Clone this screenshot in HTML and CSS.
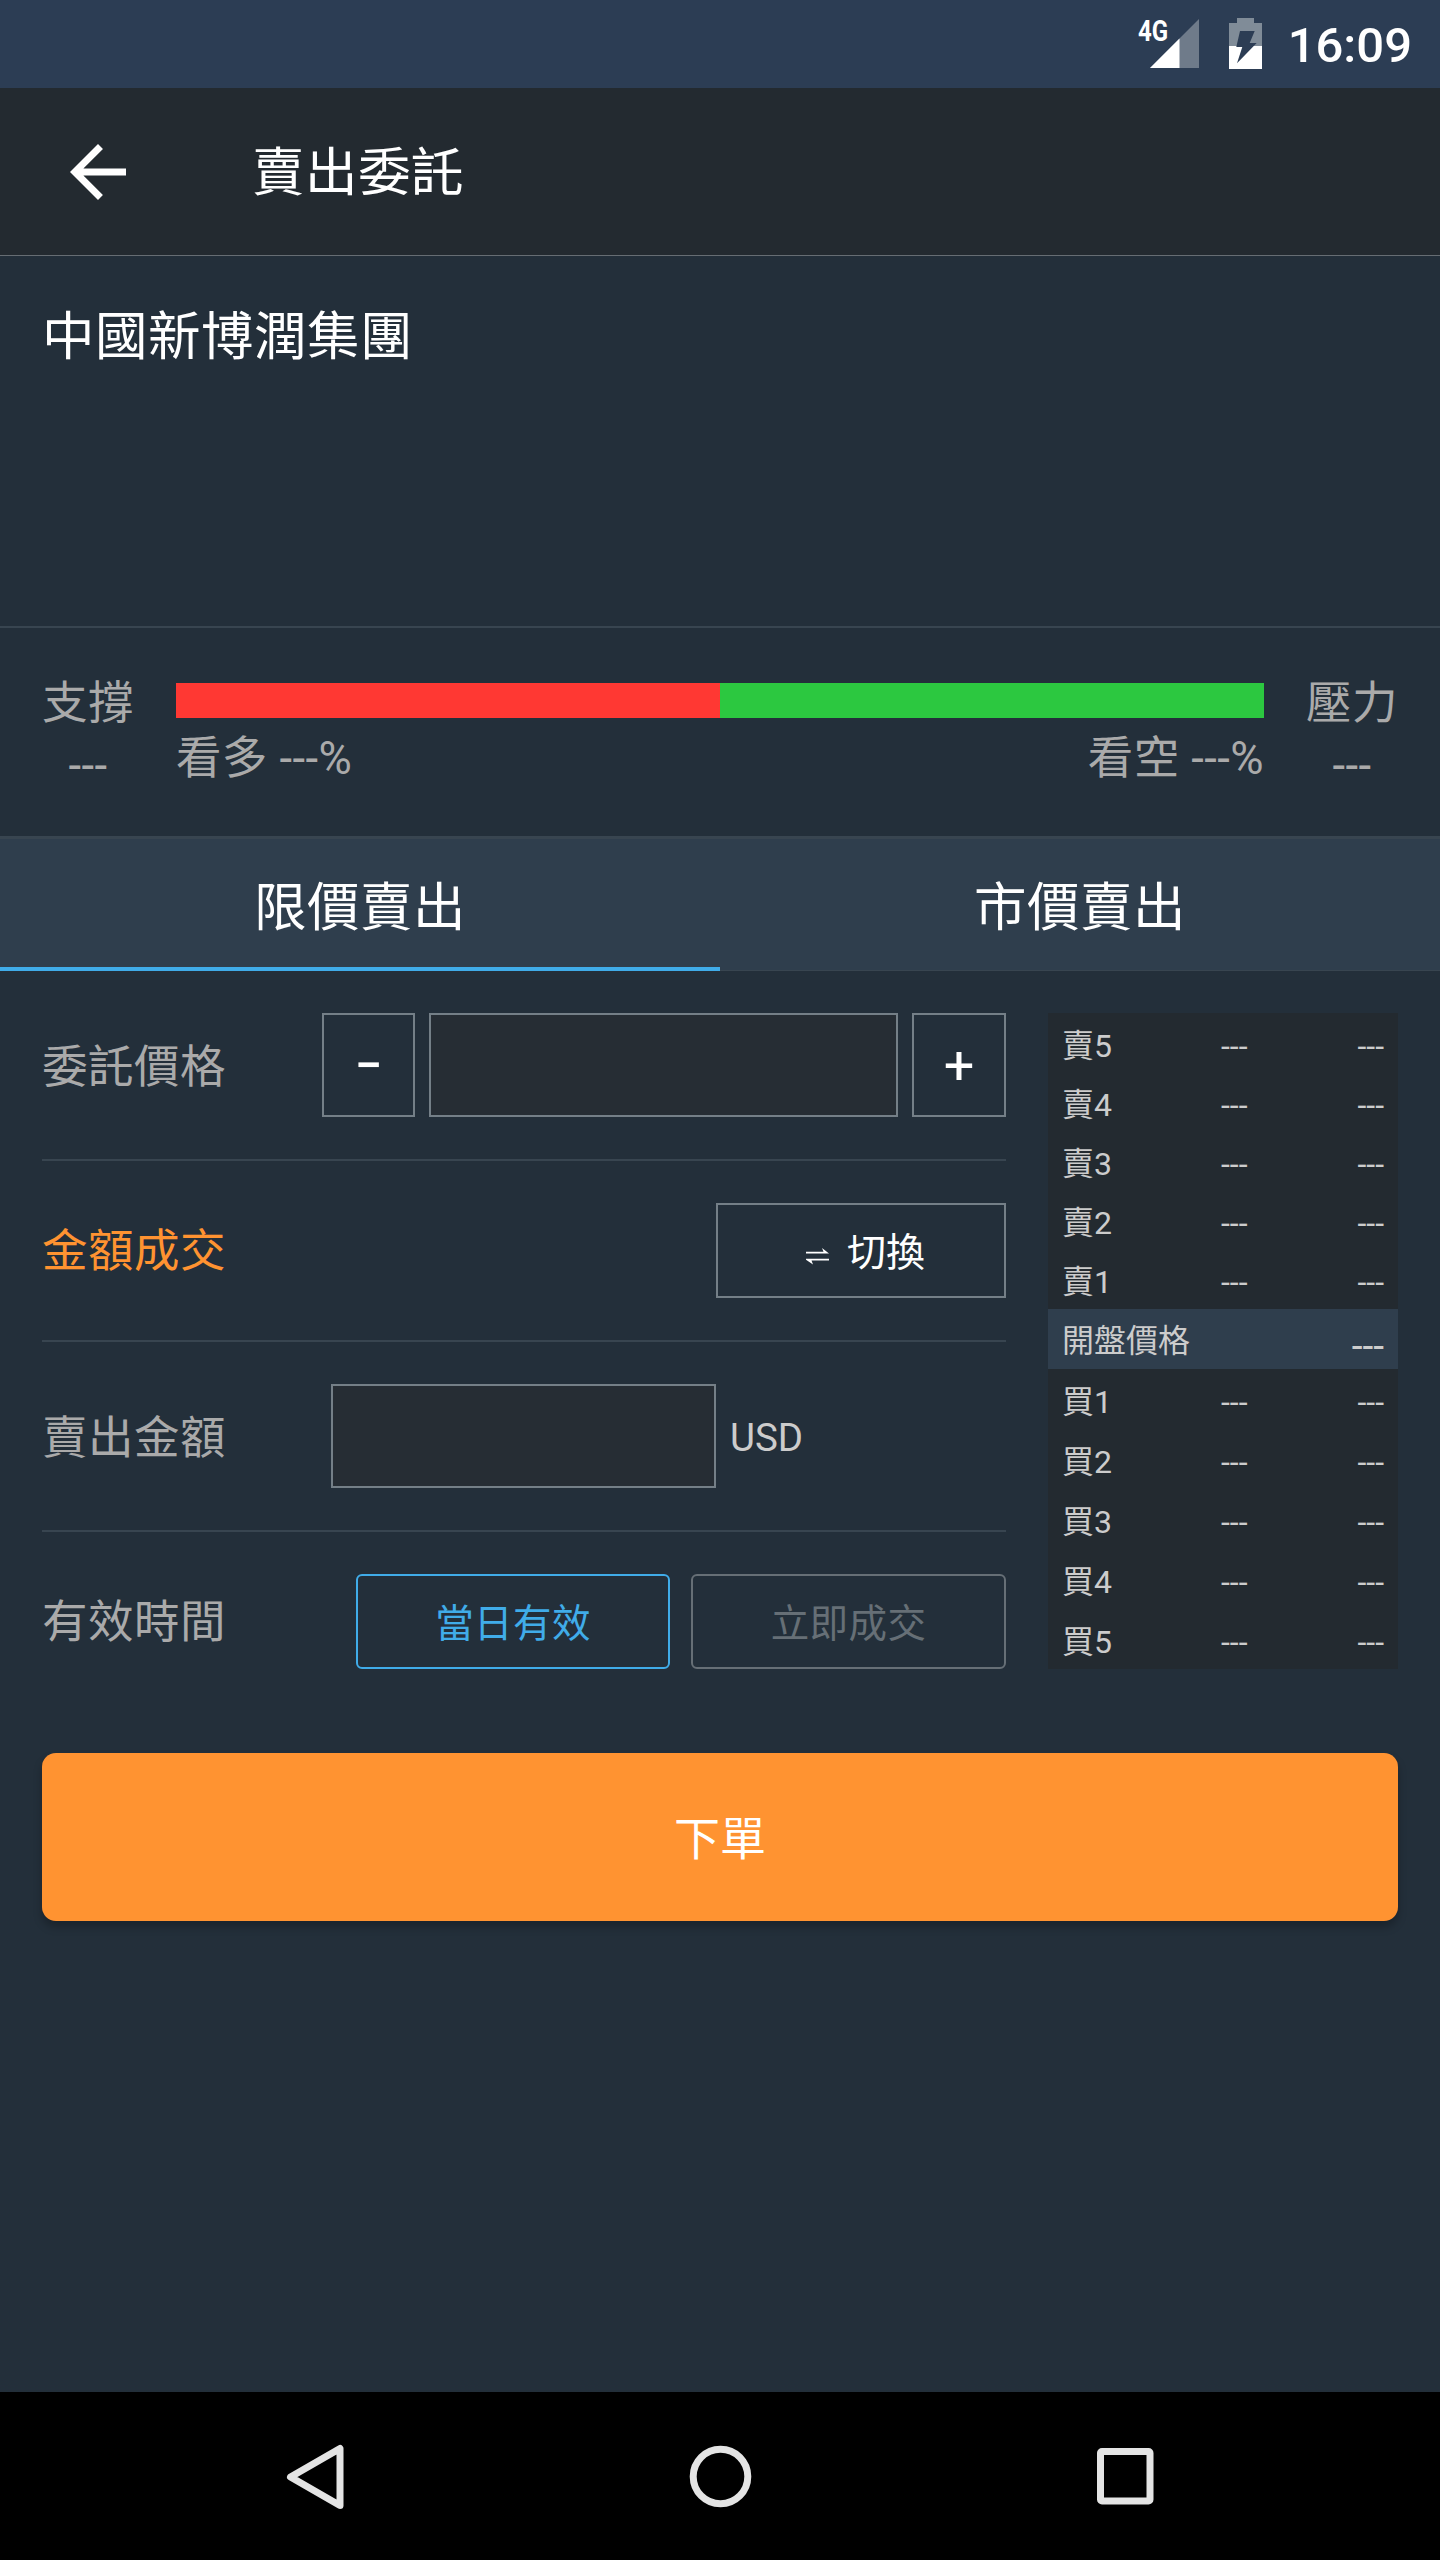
FILE: index.html
```html
<!DOCTYPE html>
<html lang="zh-Hant">
<head>
<meta charset="utf-8">
<title>賣出委託</title>
<link rel="stylesheet" href="styles.css">
</head>
<body>
<div class="screen">
  <div class="status-bar">
    <div class="signal">
      <svg width="49" height="49" viewBox="0 0 49 49"><path d="M0 49L49 0V49Z" fill="#6f7b8a"/><path d="M0 49L29.5 19.5V49Z" fill="#fff"/></svg>
      <span class="network">4G</span>
    </div>
    <svg class="battery" width="33" height="51" viewBox="0 0 33 51"><path d="M0 5H8V0H25V5H33V28H0Z" fill="#808c98"/><path d="M0 28H33V51H0Z" fill="#fff"/><path d="M11 13H25.7L20.7 25H27.7L8 45.3L13.3 29H7.3Z" fill="#2c3d54"/></svg>
    <span class="clock">16:09</span>
  </div>
  <header class="app-bar">
    <svg width="84" height="84" viewBox="0 0 24 24"><path d="M20 11H7.83l5.59-5.59L12 4l-8 8 8 8 1.41-1.41L7.83 13H20v-2z" fill="#fff"/></svg>
    <h1 class="title">賣出委託</h1>
  </header>
  <section class="company">中國新博潤集團</section>
  <section class="sentiment">
    <div class="side"><span class="side-name">支撐</span><span>---</span></div>
    <div class="gauge">
      <div class="bar"><div class="bull"></div><div class="bear"></div></div>
      <div class="legend"><span>看多 ---%</span><span>看空 ---%</span></div>
    </div>
    <div class="side"><span class="side-name">壓力</span><span>---</span></div>
  </section>
  <nav class="tabs">
    <div class="tab active">限價賣出</div>
    <div class="tab">市價賣出</div>
  </nav>
  <main class="order">
    <div class="form">
      <div class="row">
        <span class="label low">委託價格</span>
        <div class="stepper">
          <div class="step minus">−</div>
          <div class="field price"></div>
          <div class="step plus">+</div>
        </div>
      </div>
      <div class="row">
        <span class="label accent">金額成交</span>
        <div class="switch">
          <svg width="23" height="17" viewBox="0 0 23 17"><path d="M0 3.8H17.5L16 0L23 5.6H0Z" fill="#fff"/><path d="M0 10.8H23V12.6H5.5L7 16.4L0 11.8Z" fill="#fff"/></svg>
          <span>切換</span>
        </div>
      </div>
      <div class="row">
        <span class="label low">賣出金額</span>
        <div class="amount">
          <div class="field"></div>
          <span class="currency">USD</span>
        </div>
      </div>
      <div class="row">
        <span class="label">有效時間</span>
        <div class="options">
          <div class="option selected">當日有效</div>
          <div class="option">立即成交</div>
        </div>
      </div>
    </div>
    <div class="book">
      <div class="quote sell"><span>賣5</span><span>---</span><span>---</span></div>
      <div class="quote sell"><span>賣4</span><span>---</span><span>---</span></div>
      <div class="quote sell"><span>賣3</span><span>---</span><span>---</span></div>
      <div class="quote sell"><span>賣2</span><span>---</span><span>---</span></div>
      <div class="quote sell"><span>賣1</span><span>---</span><span>---</span></div>
      <div class="opening"><span>開盤價格</span><span class="opening-price">---</span></div>
      <div class="quote"><span>買1</span><span>---</span><span>---</span></div>
      <div class="quote"><span>買2</span><span>---</span><span>---</span></div>
      <div class="quote"><span>買3</span><span>---</span><span>---</span></div>
      <div class="quote"><span>買4</span><span>---</span><span>---</span></div>
      <div class="quote"><span>買5</span><span>---</span><span>---</span></div>
    </div>
  </main>
  <div class="submit">下單</div>
  <footer class="nav-bar">
    <svg width="64" height="72" viewBox="0 0 64 72"><path d="M56 7.5V64.5L6.5 36Z" fill="none" stroke="#e4e4e4" stroke-width="7" stroke-linejoin="round"/></svg>
    <svg width="64" height="72" viewBox="0 0 64 72"><circle cx="31.5" cy="35.5" r="27.3" fill="none" stroke="#e4e4e4" stroke-width="7"/></svg>
    <svg width="64" height="72" viewBox="0 0 64 72"><rect x="7.5" y="10.5" width="49.5" height="49.5" rx="1.5" fill="none" stroke="#e4e4e4" stroke-width="7" stroke-linejoin="round"/></svg>
  </footer>
</div>
</body>
</html>
```
FILE: styles.css
```css
* { box-sizing: border-box; }
body {
  margin: 0;
  background: #232f3a;
  color: #fff;
  font-family: Roboto, "Noto Sans CJK TC", sans-serif;
}
svg { display: block; flex: none; }
.screen {
  width: 1440px;
  height: 2560px;
  display: flex;
  flex-direction: column;
  background: #232f3a;
}

.status-bar {
  height: 88px;
  flex: none;
  display: flex;
  justify-content: flex-end;
  align-items: flex-start;
  padding: 18px 28px 0 0;
  background: #2c3d54;
}
.signal { position: relative; margin: 1px 30px 0 0; }
.network {
  position: absolute;
  left: -12px;
  top: -5px;
  font-size: 30px;
  line-height: 34px;
  font-weight: 700;
  transform: scaleX(.8);
  transform-origin: left center;
}
.battery { margin-right: 26px; }
.clock {
  font-size: 49px;
  line-height: 56px;
  font-weight: 500;
}

.app-bar {
  height: 168px;
  flex: none;
  display: flex;
  align-items: center;
  padding-left: 56px;
  background: #232a30;
  border-bottom: 1px solid #666d73;
}
.title {
  margin: 3px 0 0 112px;
  font-size: 52.5px;
  line-height: 62px;
  font-weight: 400;
  letter-spacing: .5px;
}

.company {
  height: 372px;
  flex: none;
  padding: 50px 42px;
  font-size: 52.5px;
  line-height: 62px;
  letter-spacing: .5px;
  border-bottom: 2px solid #384550;
}

.sentiment {
  height: 211px;
  flex: none;
  display: flex;
  gap: 42px;
  padding: 55px 42px 0;
  font-size: 45.5px;
  line-height: 56px;
  letter-spacing: .4px;
  color: #aaa;
  border-bottom: 3px solid #384550;
}
.side {
  width: 92px;
  display: flex;
  flex-direction: column;
  align-items: center;
}
.side-name { margin: -7px 0 6px; }
.gauge { flex: 1; }
.bar { display: flex; height: 35px; }
.bull { flex: 1; background: #ff3833; }
.bear { flex: 1; background: #2cc840; }
.legend {
  display: flex;
  justify-content: space-between;
  padding-top: 13px;
}

.tabs {
  height: 132px;
  flex: none;
  display: flex;
  background: #2f3e4d;
}
.tab {
  flex: 1;
  text-align: center;
  font-size: 52.5px;
  line-height: 62px;
  letter-spacing: .5px;
  padding-top: 38px;
  border-bottom: 1px solid #384550;
}
.tab.active { border-bottom: 4px solid #40ace9; }

.order {
  display: flex;
  justify-content: space-between;
  padding: 42px 42px 0;
}
.form { width: 964px; }
.row {
  display: flex;
  justify-content: space-between;
  align-items: center;
  padding-bottom: 42px;
  margin-bottom: 42px;
  border-bottom: 2px solid #384550;
}
.row:last-child { padding: 0; margin: 0; border: 0; }
.label {
  padding-top: 2px;
  font-size: 45.5px;
  line-height: 56px;
  letter-spacing: .5px;
  color: #aaa;
}
.label.low { padding-top: 6px; }
.label.accent { color: #ff9331; }
.stepper { display: flex; gap: 14px; }
.step {
  width: 94px;
  height: 104px;
  border: 2px solid #747f87;
  text-align: center;
  font-size: 49px;
  line-height: 101px;
  font-weight: 500;
}
.step.minus { width: 93px; }
.step.plus { font-size: 54px; font-weight: 400; }
.field {
  width: 385px;
  height: 104px;
  background: #262d34;
  border: 2px solid #747f87;
}
.field.price { width: 469px; }
.switch {
  width: 290px;
  height: 95px;
  display: flex;
  align-items: center;
  justify-content: flex-end;
  gap: 18px;
  padding: 5px 79px 0 0;
  font-size: 39px;
  line-height: 46px;
  border: 2px solid #747f87;
}
.switch svg { margin-top: 6px; }
.amount {
  width: 675px;
  display: flex;
  align-items: center;
  gap: 14px;
}
.currency { margin-top: 4px; font-size: 38.5px; line-height: 46px; color: #ccc; }
.options { display: flex; gap: 21px; }
.option {
  width: 315px;
  height: 95px;
  padding-top: 25px;
  border: 2px solid #666f76;
  border-radius: 6px;
  text-align: center;
  font-size: 38.5px;
  line-height: 46px;
  letter-spacing: .4px;
  color: #666f76;
}
.option.selected { width: 314px; color: #40ace9; border-color: #40ace9; }

.book {
  width: 350px;
  height: 656px;
  padding-top: 1px;
  background: #232a30;
  color: #ccc;
  font-size: 32px;
}
.quote {
  height: 60px;
  display: grid;
  grid-template-columns: 50px 135.5px 136.5px;
  padding: 13px 14px 0;
  line-height: 40px;
  text-align: right;
}
.quote.sell { height: 59px; padding-top: 12px; }
.opening {
  height: 60px;
  display: flex;
  justify-content: space-between;
  padding: 12px 14px 0;
  line-height: 40px;
  background: #2f3e4d;
}
.opening-price { padding-top: 5px; font-size: 39px; }

.submit {
  height: 168px;
  flex: none;
  margin: 84px 42px 0;
  border-radius: 14px;
  background: #ff9331;
  box-shadow: 0 6px 8px rgba(0, 0, 0, .25);
  text-align: center;
  font-size: 46px;
  line-height: 173px;
}

.nav-bar {
  height: 168px;
  flex: none;
  margin-top: auto;
  display: flex;
  justify-content: space-between;
  align-items: center;
  padding: 1px 283px 0 284px;
  background: #000;
}
```
